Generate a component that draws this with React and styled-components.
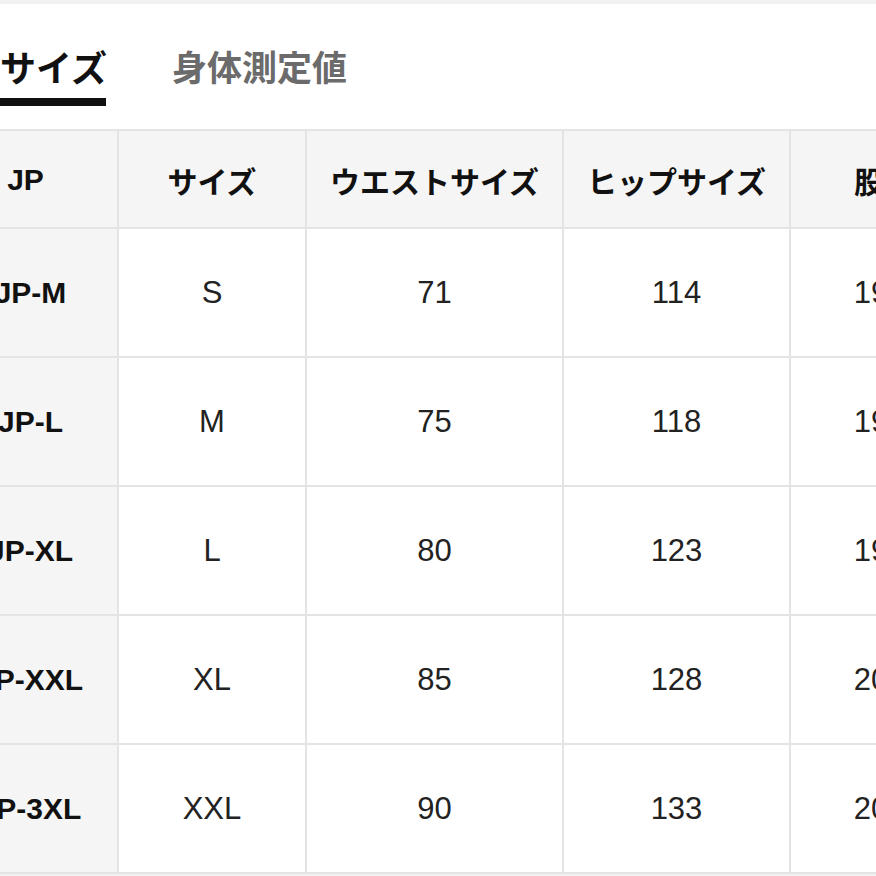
import React from "react";
import styled, { createGlobalStyle } from "styled-components";

const Global = createGlobalStyle`
  html, body { margin: 0; padding: 0; background: #fff; }
  body { font-family: "Liberation Sans", "Noto Sans CJK JP", sans-serif; overflow: hidden; }
`;

const Page = styled.div`
  width: 876px;
  height: 876px;
  overflow: hidden;
  background: #fff;
  display: flex;
  flex-direction: column;
`;

const TopBand = styled.div`
  height: 4px;
  background: #f1f1f1;
  flex: none;
`;

const Tabs = styled.div`
  display: flex;
  gap: 66px;
  padding-top: 42px;
  height: 60px;
  flex: none;
`;

const Tab = styled.div`
  font-family: "Noto Sans CJK JP", sans-serif;
  font-size: ${(p) => (p.$active ? "36px" : "35px")};
  line-height: 40px;
  font-weight: 700;
  color: ${(p) => (p.$active ? "#111" : "#6b6b6b")};
  box-sizing: border-box;
  height: 60px;
  padding-bottom: 12px;
  border-bottom: ${(p) => (p.$active ? "8px solid #111" : "none")};
  width: ${(p) => (p.$active ? "106px" : "auto")};
  white-space: nowrap;
`;

const TableWrap = styled.div`
  margin-top: 23px;
  overflow: hidden;
  flex: 1;
  background: #f1f1f1;
`;

const Grid = styled.div`
  display: grid;
  grid-template-columns: 173px 186px 255px 225px 186px;
  grid-template-rows: 96px repeat(5, 127px);
  gap: 2px;
  padding: 2px 0;
  background: #e4e4e4;
  margin-left: -56px;
  width: max-content;
`;

const Cell = styled.div`
  display: flex;
  align-items: center;
  justify-content: center;
  background: ${(p) => (p.$shade ? "#f5f5f5" : "#fff")};
  font-family: ${(p) =>
    p.$jp ? '"Noto Sans CJK JP", sans-serif' : '"Liberation Sans", "Noto Sans CJK JP", sans-serif'};
  font-size: ${(p) => (p.$jp ? "30px" : p.$bold ? "30px" : "31px")};
  font-weight: ${(p) => (p.$bold ? 700 : 400)};
  color: ${(p) => (p.$bold ? "#111" : "#222")};
  white-space: nowrap;
  padding-top: ${(p) => (p.$head ? "2px" : "0")};
  padding-right: ${(p) => (p.$corner ? "10px" : "0")};
`;

const headers = ["JP", "サイズ", "ウエストサイズ", "ヒップサイズ", "股下"];
const rows = [
  ["JP-M", "S", "71", "114", "19.5"],
  ["JP-L", "M", "75", "118", "19.5"],
  ["JP-XL", "L", "80", "123", "19.5"],
  ["JP-XXL", "XL", "85", "128", "20.5"],
  ["JP-3XL", "XXL", "90", "133", "20.5"],
];

export default function App() {
  return (
    <Page>
      <Global />
      <TopBand />
      <Tabs>
        <Tab $active>サイズ</Tab>
        <Tab>身体測定値</Tab>
      </Tabs>
      <TableWrap>
        <Grid>
          {headers.map((h, i) => (
            <Cell key={h} $shade $bold $head $jp={i > 0} $corner={i === 0}>
              {h}
            </Cell>
          ))}
          {rows.map((r) =>
            r.map((v, i) => (
              <Cell key={r[0] + i} $shade={i === 0} $bold={i === 0}>
                {v}
              </Cell>
            ))
          )}
        </Grid>
      </TableWrap>
    </Page>
  );
}
